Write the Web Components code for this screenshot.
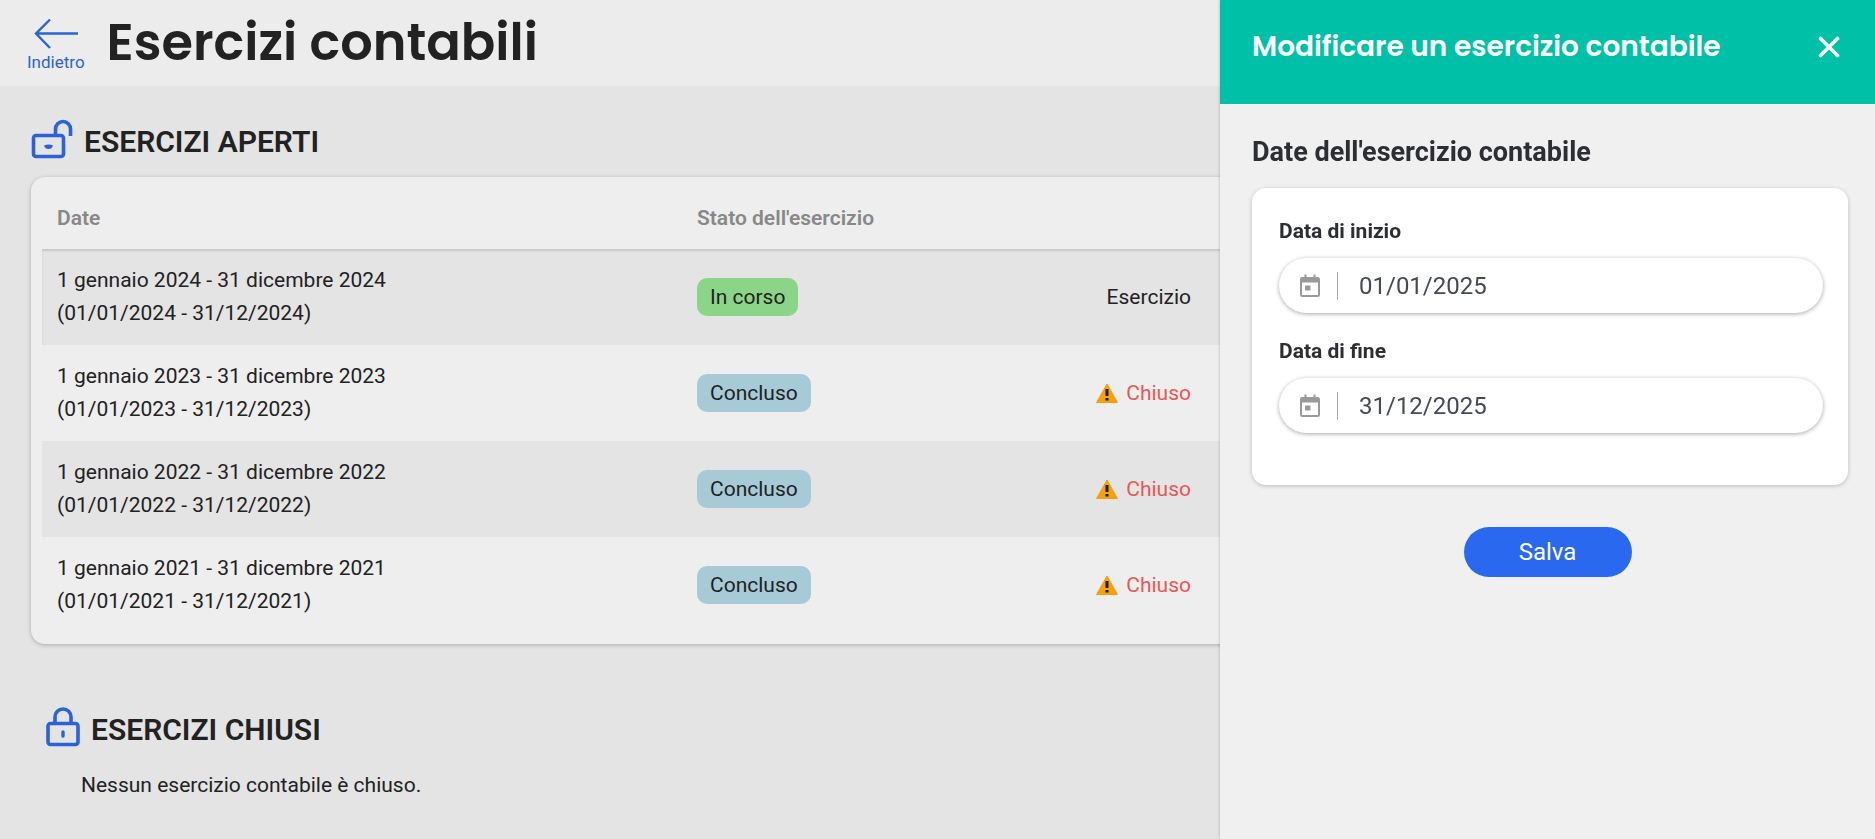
<!DOCTYPE html>
<html lang="it">
<head>
<meta charset="utf-8">
<meta name="viewport" content="width=device-width, initial-scale=1">
<title>Esercizi contabili</title>
<style>
  body { margin: 0; min-height: 100vh; background: #e4e4e4; color: #222; font-family: Roboto, sans-serif; font-size: 21px; line-height: 33px; overflow-x: hidden; }
</style>
</head>
<body>
<page-header heading="Esercizi contabili"></page-header>
<main>
  <year-section heading="ESERCIZI APERTI" icon="open"><years-table></years-table></year-section>
  <year-section heading="ESERCIZI CHIUSI" icon="closed">Nessun esercizio contabile è chiuso.</year-section>
</main>
<side-drawer heading="Modificare un esercizio contabile">
  <form-card heading="Date dell'esercizio contabile">
    <date-field label="Data di inizio" value="01/01/2025"></date-field>
    <date-field label="Data di fine" value="31/12/2025"></date-field>
  </form-card>
  <save-button>Salva</save-button>
</side-drawer>
<script>
class Base extends HTMLElement {
  connectedCallback() {
    if (this.shadowRoot) return;
    this.attachShadow({ mode: 'open' }).innerHTML =
      '<style>*{box-sizing:border-box}:host{box-sizing:border-box;display:block}</style>' + this.render();
  }
  attr(name) { return this.getAttribute(name) || ''; }
}

customElements.define('page-header', class extends Base {
  render() { return `
    <style>
      header { display: flex; height: 86px; padding: 0 27px; gap: 22px; background: #ececec; }
      a { display: flex; flex-direction: column; align-items: center; padding-top: 18px; color: #2b62dc; font-size: 17px; line-height: 20px; text-decoration: none; gap: 3px; }
      svg { display: block; }
      h1 { margin: 0; font: 600 51px/84px Poppins, Inter, sans-serif; color: #222; white-space: nowrap; }
    </style>
    <header>
      <a href="#"><svg width="44" height="31" viewBox="0 0 44 31" fill="none" stroke="#2b62dc" stroke-width="2.4"><path d="M16 1.500 2 15.500 16 30M2 15.500H44"/></svg>Indietro</a>
      <h1>${this.attr('heading')}</h1>
    </header>`; }
});

const LOCKS = {
  open: `<svg width="42" height="40" viewBox="0 0 42 40" fill="none" stroke="#2b62dc" stroke-width="3.6"><rect x="2.500" y="16.500" width="30" height="21" rx="2.500"/><path d="M24.500 16V10a7.500 7.500 0 0 1 15 0v7"/><path d="M13 26.500q4.500-2 9 0-1 3.500-4.500 3.500T13 26.500Z" fill="#2b62dc" stroke="none"/></svg>`,
  closed: `<svg width="34" height="40" viewBox="0 0 34 40" fill="none" stroke="#2b62dc" stroke-width="3.6"><rect x="2" y="16.500" width="30" height="21" rx="2.500"/><path d="M9 16V10a8 8 0 0 1 16 0v6"/><path d="M17 25v4" stroke-linecap="round" stroke-width="3.400"/></svg>`
};
customElements.define('year-section', class extends Base {
  render() { return `
    <style>
      :host { padding: 33px 31px 0; }
      :host([icon=closed]) { padding: 63px 46px 0; }
      h2 { display: flex; align-items: flex-end; margin: 0; gap: 11px; font-size: 30px; font-weight: 600; line-height: 34px; color: #222; }
      .body { padding-top: 18px; }
      :host([icon=closed]) .body { padding: 22px 35px 0; }
    </style>
    <section><h2>${LOCKS[this.attr('icon')]}${this.attr('heading')}</h2><div class="body"><slot></slot></div></section>`; }
});

customElements.define('status-badge', class extends Base {
  render() { return `
    <style>
      :host { display: inline-block; vertical-align: middle; padding: 0 13px; border-radius: 10px; line-height: 38px; background: #a7cbd6; }
      :host([kind=active]) { background: #8bd588; }
    </style><slot></slot>`; }
});

customElements.define('closing-alert', class extends Base {
  render() { return `
    <style>
      :host { display: inline-flex; align-items: center; vertical-align: middle; gap: 8px; color: #e85854; }
      svg { display: block; }
    </style>
    <svg width="22" height="20" viewBox="0 0 22 20"><path d="M11 1 21.500 19.500H.5Z" fill="#f5a00c" stroke="#f5a00c" stroke-linejoin="round"/><path d="M11 6v7M11 15v2.500" stroke="#1c1c1c" stroke-width="3"/></svg><slot></slot>`; }
});

const YEARS = [2024, 2023, 2022, 2021];
customElements.define('years-table', class extends Base {
  render() { return `
    <style>
      :host { padding: 11px; border-radius: 14px; background: #eee; box-shadow: 0 1px 4px rgba(0,0,0,.25); }
      table { width: 100%; table-layout: fixed; border-collapse: collapse; }
      .dates { width: 640px; }
      .state { width: 330px; }
      .action { width: 194px; }
      th { height: 61px; padding: 0 15px; text-align: left; font-weight: 600; color: #888; }
      td { height: 96px; padding: 0 15px; }
      td:nth-child(3) { text-align: right; }
      tbody tr:nth-child(odd) { background: #e4e4e4; }
      tbody tr:first-child { box-shadow: inset 0 2px 2px #c8c8c8; }
    </style>
    <table>
      <colgroup><col class="dates"><col class="state"><col class="action"><col></colgroup>
      <thead><tr><th scope="col">Date</th><th scope="col">Stato dell'esercizio</th><th></th><th></th></tr></thead>
      <tbody>${YEARS.map((y, i) => `<tr>
        <td>1 gennaio ${y} - 31 dicembre ${y}<br>(01/01/${y} - 31/12/${y})</td>
        <td>${i ? '<status-badge>Concluso</status-badge>' : '<status-badge kind="active">In corso</status-badge>'}</td>
        <td>${i ? '<closing-alert>Chiuso</closing-alert>' : 'Esercizio'}</td><td></td>
      </tr>`).join('')}</tbody>
    </table>`; }
});

customElements.define('side-drawer', class extends Base {
  render() { return `
    <style>
      :host { position: fixed; top: 0; right: 0; bottom: 0; width: min(655px, 100%); background: #f0f0f0; box-shadow: 0 0 3px rgba(0,0,0,.25); }
      header { display: flex; justify-content: space-between; height: 104px; padding: 24px 32px 0; background: #00c1a7; color: #fff; }
      h2 { margin: 0; font: 600 28px/46px Poppins, Inter, sans-serif; white-space: nowrap; }
      button { width: 28px; height: 46px; padding: 0; border: 0; background: none; }
      svg { display: block; margin: auto; }
    </style>
    <aside>
      <header><h2>${this.attr('heading')}</h2>
        <button type="button" aria-label="Chiudi"><svg width="22" height="22" viewBox="0 0 22 22" stroke="#fff" stroke-width="3.600" stroke-linecap="round"><path d="m2.500 2.500 17 17m0-17-17 17"/></svg></button>
      </header>
      <slot></slot>
    </aside>`; }
});

customElements.define('form-card', class extends Base {
  render() { return `
    <style>
      :host { padding: 28px 27px 0 32px; }
      h3 { margin: 0; font-size: 27px; font-weight: 700; line-height: 40px; color: #2c2e33; }
      .card { display: grid; gap: 21px; margin-top: 16px; padding: 26px 25px 52px 27px; border-radius: 14px; background: #fff; box-shadow: 0 1px 4px rgba(0,0,0,.22); }
    </style>
    <section><h3>${this.attr('heading')}</h3><div class="card"><slot></slot></div></section>`; }
});

customElements.define('date-field', class extends Base {
  render() { return `
    <style>
      label { display: block; font-weight: 700; line-height: 34px; color: #2c2e33; }
      .box { display: flex; align-items: center; height: 55px; margin-top: 10px; padding: 0 21px; border-radius: 28px; background: #fff; box-shadow: 0 1px 4px rgba(0,0,0,.35); }
      svg { flex: none; }
      input { flex: 1; min-width: 0; height: 28px; margin-left: 17px; padding: 0 0 0 21px; border: 0; border-left: 1px solid #aaa; outline: 0; background: none; font: 24px/28px Roboto, sans-serif; color: #454a56; }
    </style>
    <label for="date">${this.attr('label')}</label>
    <div class="box">
      <svg width="20" height="23" viewBox="0 0 20 23" fill="none" stroke="#999"><rect x="1" y="4" width="18" height="18" rx="1.500" stroke-width="2"/><path d="M1 6h18" stroke-width="5"/><path d="M5.500.5V4m9-3.500V4" stroke-width="2"/><path d="M5 11.500h5.500v5H5z" fill="#999" stroke="none"/></svg>
      <input id="date" type="text" value="${this.attr('value')}">
    </div>`; }
});

customElements.define('save-button', class extends Base {
  render() { return `
    <style>
      :host { display: flex; justify-content: center; padding-top: 42px; }
      button { width: 168px; height: 50px; border: 0; border-radius: 25px; background: #2a68f0; color: #fff; font: 24px/50px Roboto, sans-serif; padding: 0; }
    </style>
    <button type="button"><slot></slot></button>`; }
});
</script>
</body>
</html>
